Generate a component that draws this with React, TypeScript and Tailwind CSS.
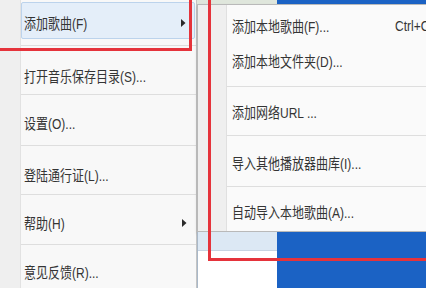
import React from "react";

const font = "font-['Liberation_Sans','Noto_Sans_CJK_SC',sans-serif]";
const txt = "inline-block origin-center scale-y-[1.22] text-[12px] text-[#343434]";

const Arrow = () => (
    <svg width="5" height="8" viewBox="0 0 5 8" className="shrink-0">
        <path d="M0 0 L4.5 4 L0 8 Z" fill="#2b2b2b" />
    </svg>
);

interface RowProps {
    label: string;
    h: string;
    pt: string;
    arrow?: boolean;
}

const MainRow = ({ label, h, pt, arrow }: RowProps) => (
    <div
        className={`${h} ${pt} flex items-center border-t border-[#dedede] pl-[3px] pr-[9px]`}
    >
        <span className="flex-1">
            <span className={txt}>{label}</span>
        </span>
        {arrow && <Arrow />}
    </div>
);

const SubRow = ({
    label,
    h,
    pad,
    sep,
    shortcut,
}: {
    label: string;
    h: string;
    pad: string;
    sep?: boolean;
    shortcut?: string;
}) => (
    <div
        className={`${h} ${pad} flex items-center pl-[5px] ${
            sep ? "border-t border-[#dedede]" : ""
        }`}
    >
        <span className="w-[163px] shrink-0">
            <span className={txt}>{label}</span>
        </span>
        {shortcut && (
            <span className={`${txt} whitespace-nowrap`}>{shortcut}</span>
        )}
    </div>
);

export default function App() {
    return (
        <div
            className={`relative flex h-[288px] w-[426px] overflow-hidden bg-[#f0f0f0] ${font}`}
        >
            {/* main menu */}
            <div className="flex h-full w-[197px] shrink-0 flex-col border-r border-[#c4c4c4] bg-[#f8f8f8]">
                <div className="h-[5px] overflow-hidden bg-[#e8ebee] pl-[18px]">
                    <div className="-mt-[11px] text-[13px] font-bold text-[#243d6b]">
                        编辑操作 ...
                    </div>
                </div>
                <div className="flex flex-1">
                    <div className="w-[21px] shrink-0 border-r border-[#e2e2e2] bg-[#efefef]" />
                    <div className="flex flex-1 flex-col">
                        <div className="flex h-[45px] flex-col pb-[6px] pr-[1px] pt-[2px]">
                            <div className="flex flex-1 items-center rounded-[2px] border border-[#bcd3ec] bg-[#e4eef9] pl-[2px] pr-[8px] pt-[5px]">
                                <span className="flex-1">
                                    <span className={txt}>添加歌曲(F)</span>
                                </span>
                                <Arrow />
                            </div>
                        </div>
                        <MainRow label="打开音乐保存目录(S)..." h="h-[49px]" pt="pt-[11px]" />
                        <MainRow label="设置(O)..." h="h-[51px]" pt="pt-[6px]" />
                        <MainRow label="登陆通行证(L)..." h="h-[49px]" pt="pt-[9px]" />
                        <MainRow label="帮助(H)" h="h-[50px]" pt="pt-[7px]" arrow />
                        <MainRow label="意见反馈(R)..." h="h-[49px]" pt="pt-[6px]" />
                    </div>
                </div>
            </div>

            {/* right side: submenu over window background */}
            <div className="flex flex-1 flex-col">
                <div className="flex h-[4px]">
                    <div className="w-[80px] bg-[#dfe6dc]" />
                    <div className="flex-1 bg-[#1b62c4]" />
                </div>
                <div className="flex h-[228px] border border-r-0 border-[#b9b9b9] bg-[#fafafa] shadow-[0_2px_3px_rgba(0,0,0,0.15)]">
                    <div className="w-[29px] shrink-0 border-r border-[#e0e0e0] bg-[#efefef]" />
                    <div className="flex flex-1 flex-col">
                        <SubRow
                            label="添加本地歌曲(F)..."
                            h="h-[40px]"
                            pad="pt-[2px]"
                            shortcut="Ctrl+O"
                        />
                        <SubRow
                            label="添加本地文件夹(D)..."
                            h="h-[36px]"
                            pad="pb-[5px]"
                        />
                        <div className="h-[5px]" />
                        <SubRow
                            label="添加网络URL ..."
                            h="h-[49px]"
                            pad="pt-[1px]"
                            sep
                        />
                        <SubRow
                            label="导入其他播放器曲库(I)..."
                            h="h-[51px]"
                            pad="pt-[4px]"
                            sep
                        />
                        <SubRow
                            label="自动导入本地歌曲(A)..."
                            h="h-[45px]"
                            pad="pt-[5px]"
                            sep
                        />
                    </div>
                </div>
                <div className="flex flex-1">
                    <div className="flex w-[80px] flex-col border-l border-[#a9b8c8]">
                        <div className="h-[19px] border-b border-[#c7d4e2] bg-[#dce8f4]" />
                        <div className="flex-1 bg-white" />
                    </div>
                    <div className="flex-1 bg-[#1b62c4]" />
                </div>
            </div>

            {/* red annotation frames */}
            <div className="pointer-events-none absolute left-[-10px] top-[-10px] h-[61px] w-[202px] border-[3px] border-[#e5333b]" />
            <div className="pointer-events-none absolute left-[208px] right-[-10px] top-[-10px] h-[271px] border-[3px] border-[#e5333b]" />
        </div>
    );
}
